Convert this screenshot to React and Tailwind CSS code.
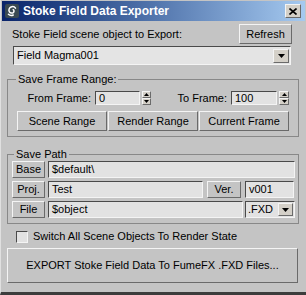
import React from 'react';

const raised =
  'border border-t-[#f4f4f4] border-l-[#f4f4f4] border-r-[#6a6a6a] border-b-[#6a6a6a]';
const sunken =
  'border border-t-[#4a4a4a] border-l-[#4a4a4a] border-r-[#f4f4f4] border-b-[#f4f4f4] bg-[#e2e2e2]';

function Btn({ className = '', children }) {
  return (
    <div className={`flex items-center justify-center bg-[#c4c4c4] ${raised} ${className}`}>
      {children}
    </div>
  );
}

function Field({ className = '', children }) {
  return (
    <div className={`flex items-center pl-[3px] overflow-hidden whitespace-nowrap ${sunken} ${className}`}>
      {children}
    </div>
  );
}

function DownArrow({ className = '' }) {
  return (
    <div className={`flex items-center justify-center bg-[#d4d0c8] ${raised} ${className}`}>
      <svg width="7" height="4" viewBox="0 0 7 4">
        <path d="M0 0h7L3.5 4z" fill="#000" />
      </svg>
    </div>
  );
}

function Spinner({ className = '' }) {
  return (
    <div className={`flex flex-col h-[14px] ${className}`}>
      <div className={`flex-1 flex items-center justify-center bg-[#d4d0c8] ${raised}`}>
        <svg width="5" height="3" viewBox="0 0 5 3">
          <path d="M2.5 0L5 3H0z" fill="#000" />
        </svg>
      </div>
      <div className={`flex-1 flex items-center justify-center bg-[#d4d0c8] ${raised}`}>
        <svg width="5" height="3" viewBox="0 0 5 3">
          <path d="M0 0h5L2.5 3z" fill="#000" />
        </svg>
      </div>
    </div>
  );
}

function MaxIcon() {
  return (
    <svg width="14" height="14" viewBox="0 0 14 14">
      <rect x="0" y="0" width="14" height="14" rx="2" fill="#3b4a52" />
      <path
        d="M10.5 4.2C9.6 2.8 7.6 2.3 6 3 4.2 3.8 3.4 5.9 4.3 7.6c.8 1.5 2.8 1.9 4 1 1-.8.9-2.3-.1-2.9"
        fill="none"
        stroke="#fff"
        strokeWidth="1.5"
        strokeLinecap="round"
      />
      <path
        d="M3.4 10.2c1.2 1.2 3.3 1.5 4.9.8"
        fill="none"
        stroke="#fff"
        strokeWidth="1.4"
        strokeLinecap="round"
      />
    </svg>
  );
}

export default function App() {
  return (
    <div className="w-[306px] h-[295px] bg-[#c4c4c4] flex flex-col text-[11px] leading-[13px] text-black font-['Liberation_Sans',Arial,sans-serif] border-b-[3px] border-b-[#3c3c3c] border-l border-l-[#e0e0e0]">
      {/* title bar */}
      <div className="mx-[1px] mt-[1px] h-[20px] flex items-center bg-gradient-to-r from-[#0a246a] to-[#a6caf0]">
        <div className="ml-[3px]">
          <MaxIcon />
        </div>
        <span className="ml-[4px] text-white font-bold text-[12px]">Stoke Field Data Exporter</span>
        <div className={`ml-auto mr-[4px] w-[16px] h-[14px] flex items-center justify-center bg-[#d4d0c8] ${raised}`}>
          <svg width="8" height="7" viewBox="0 0 8 7">
            <path d="M0.5 0.5l7 6M7.5 0.5l-7 6" stroke="#000" strokeWidth="1.6" />
          </svg>
        </div>
      </div>

      {/* object row */}
      <div className="mt-[3px] h-[20px] flex items-center">
        <span className="ml-[11px]">Stoke Field scene object to Export:</span>
        <Btn className="ml-auto mr-[14px] w-[53px] h-[20px]">Refresh</Btn>
      </div>
      <div className={`mt-[2px] ml-[12px] w-[278px] h-[19px] flex items-center pl-[3px] pr-[1px] ${sunken} bg-[#e4e4e4]`}>
        <span>Field Magma001</span>
        <DownArrow className="ml-auto w-[16px] h-[14px]" />
      </div>

      {/* save frame range */}
      <fieldset className="mt-[9px] ml-[6px] w-[292px] border border-[#888888] pb-[5px]">
        <legend className="ml-[8px] px-[2px] leading-[11px]">Save Frame Range:</legend>
        <div className="mt-[6px] h-[14px] flex">
          <div className="w-[143px] flex items-center justify-end">
            <span>From Frame:</span>
            <Field className="ml-[4px] w-[45px] h-[14px]">0</Field>
            <Spinner className="ml-[2px] w-[9px]" />
          </div>
          <div className="w-[138px] flex items-center justify-end">
            <span>To Frame:</span>
            <Field className="ml-[4px] w-[46px] h-[14px]">100</Field>
            <Spinner className="ml-[2px] w-[10px]" />
          </div>
        </div>
        <div className="mt-[6px] ml-[9px] flex gap-[1px]">
          <Btn className="w-[90px] h-[20px]">Scene Range</Btn>
          <Btn className="w-[90px] h-[20px]">Render Range</Btn>
          <Btn className="w-[90px] h-[20px]">Current Frame</Btn>
        </div>
      </fieldset>

      {/* save path */}
      <fieldset className="mt-[12px] ml-[6px] w-[292px] border border-[#888888] pb-[5px]">
        <legend className="ml-[6px] px-[2px] leading-[11px]">Save Path</legend>
        <div className="mt-[1px] flex flex-col gap-[3px]">
          <div className="h-[17px] flex">
            <Btn className="ml-[4px] w-[33px] h-[17px]">Base</Btn>
            <Field className="ml-[3px] w-[247px] h-[17px]">$default\</Field>
          </div>
          <div className="h-[17px] flex">
            <Btn className="ml-[4px] w-[33px] h-[17px]">Proj.</Btn>
            <Field className="ml-[3px] w-[155px] h-[17px]">Test</Field>
            <Btn className="ml-[4px] w-[34px] h-[17px]">Ver.</Btn>
            <Field className="ml-[4px] w-[49px] h-[17px]">v001</Field>
          </div>
          <div className="h-[17px] flex">
            <Btn className="ml-[4px] w-[33px] h-[17px]">File</Btn>
            <Field className="ml-[3px] w-[195px] h-[17px]">$object</Field>
            <div className={`ml-[2px] w-[50px] h-[17px] flex items-center pl-[2px] pr-[1px] ${sunken}`}>
              <span>.FXD</span>
              <DownArrow className="ml-auto w-[15px] h-[13px]" />
            </div>
          </div>
        </div>
      </fieldset>

      {/* checkbox */}
      <div className="mt-[6px] h-[13px] flex items-center">
        <div className={`ml-[15px] w-[12px] h-[12px] ${sunken}`} />
        <span className="ml-[5px]">Switch All Scene Objects To Render State</span>
      </div>

      {/* export */}
      <Btn className="mt-[5px] ml-[6px] w-[291px] h-[35px]">EXPORT Stoke Field Data To FumeFX .FXD Files...</Btn>
    </div>
  );
}
